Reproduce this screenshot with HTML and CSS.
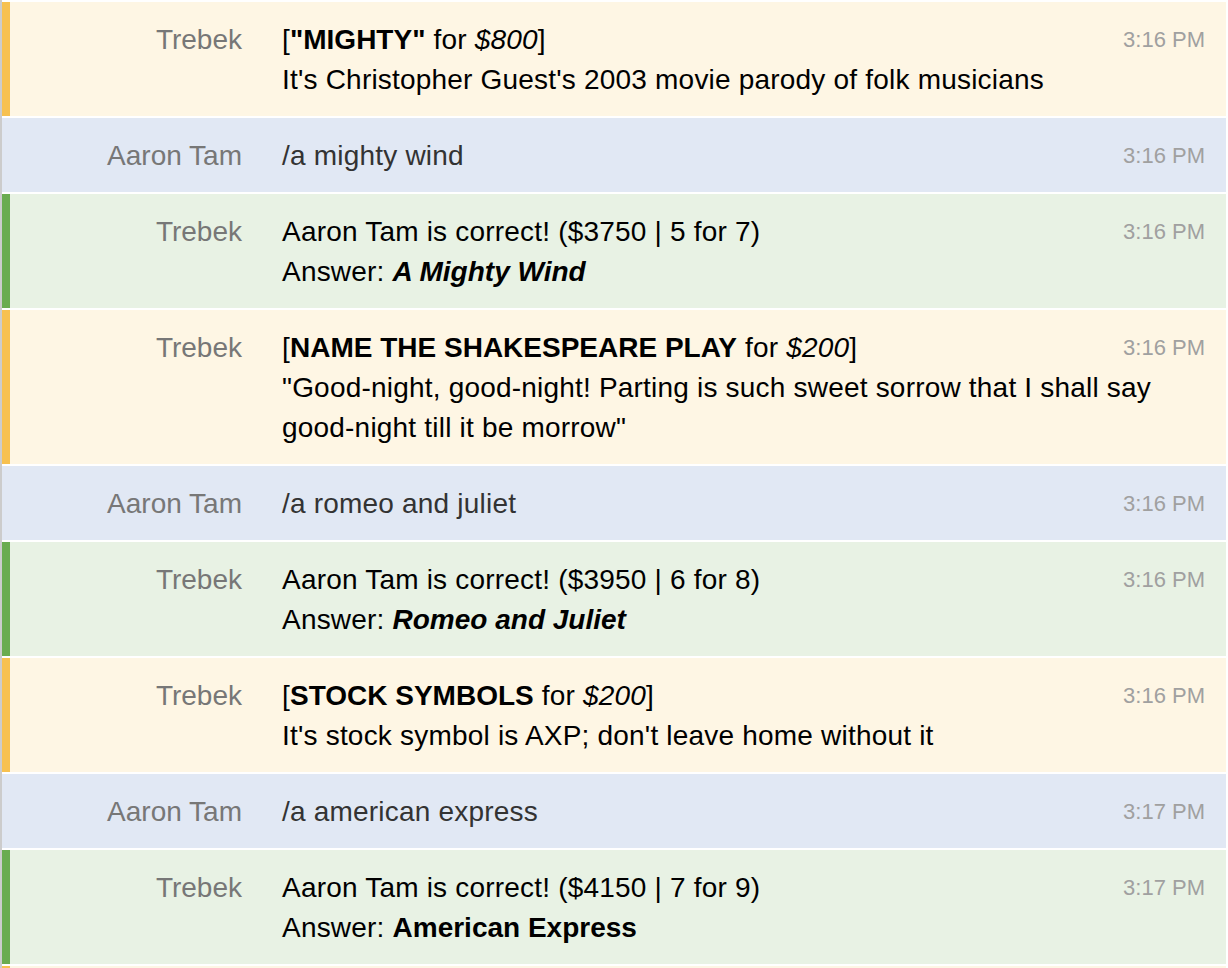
FILE: index.html
```html
<!DOCTYPE html>
<html>
<head>
<meta charset="utf-8">
<link rel="stylesheet" href="styles.css">
</head>
<body>
<div class="log">
  <div class="row clue">
    <div class="name">Trebek</div>
    <div class="body">
      <span class="time">3:16 PM</span>
      <div class="msg"><div>[<b>"MIGHTY"</b> for <i>$800</i>]</div><div>It's Christopher Guest's 2003 movie parody of folk musicians</div></div>
    </div>
  </div>
  <div class="row user">
    <div class="name">Aaron Tam</div>
    <div class="body">
      <span class="time">3:16 PM</span>
      <div class="msg">/a mighty wind</div>
    </div>
  </div>
  <div class="row correct">
    <div class="name">Trebek</div>
    <div class="body">
      <span class="time">3:16 PM</span>
      <div class="msg"><div>Aaron Tam is correct! ($3750 | 5 for 7)</div><div>Answer: <b><i>A Mighty Wind</i></b></div></div>
    </div>
  </div>
  <div class="row clue">
    <div class="name">Trebek</div>
    <div class="body">
      <span class="time">3:16 PM</span>
      <div class="msg"><div>[<b>NAME THE SHAKESPEARE PLAY</b> for <i>$200</i>]</div><div>"Good-night, good-night! Parting is such sweet sorrow that I shall say <span class="nowrap">good-night</span> till it be morrow"</div></div>
    </div>
  </div>
  <div class="row user">
    <div class="name">Aaron Tam</div>
    <div class="body">
      <span class="time">3:16 PM</span>
      <div class="msg">/a romeo and juliet</div>
    </div>
  </div>
  <div class="row correct">
    <div class="name">Trebek</div>
    <div class="body">
      <span class="time">3:16 PM</span>
      <div class="msg"><div>Aaron Tam is correct! ($3950 | 6 for 8)</div><div>Answer: <b><i>Romeo and Juliet</i></b></div></div>
    </div>
  </div>
  <div class="row clue">
    <div class="name">Trebek</div>
    <div class="body">
      <span class="time">3:16 PM</span>
      <div class="msg"><div>[<b>STOCK SYMBOLS</b> for <i>$200</i>]</div><div>It's stock symbol is AXP; don't leave home without it</div></div>
    </div>
  </div>
  <div class="row user">
    <div class="name">Aaron Tam</div>
    <div class="body">
      <span class="time">3:17 PM</span>
      <div class="msg">/a american express</div>
    </div>
  </div>
  <div class="row correct">
    <div class="name">Trebek</div>
    <div class="body">
      <span class="time">3:17 PM</span>
      <div class="msg"><div>Aaron Tam is correct! ($4150 | 7 for 9)</div><div>Answer: <b>American Express</b></div></div>
    </div>
  </div>
  <div class="row clue tail"></div>
</div>
</body>
</html>
```
FILE: styles.css
```css
html, body {
  margin: 0;
  padding: 0;
  background: #ffffff;
}
body {
  font-family: "Liberation Sans", Arial, Helvetica, sans-serif;
  height: 968px;
  overflow: hidden;
}
.log {
  border-left: 2px solid #cccccc;
  padding-top: 2px;
  min-height: 968px;
  box-sizing: border-box;
}
.row {
  display: grid;
  grid-template-columns: 232px 1fr;
  column-gap: 40px;
  margin: 0 2px 2px 0;
  padding: 18px 21px 16px 0;
  border-left: 8px solid transparent;
  font-size: 28px;
  line-height: 40px;
}
.tail {
  min-height: 40px;
}
.clue {
  background: #fef6e4;
  border-left-color: #f7c150;
}
.user {
  background: #e1e8f4;
  border-left-color: #e1e8f4;
}
.correct {
  background: #e8f2e4;
  border-left-color: #6aac50;
}
.name {
  text-align: right;
  color: #777777;
}
.msg {
  color: #000000;
  letter-spacing: 0.2px;
}
.msg b {
  letter-spacing: 0;
}
.user .msg {
  color: #333333;
}
.time {
  float: right;
  margin-left: 16px;
  color: #a0a0a0;
  font-size: 22px;
  line-height: 40px;
}
.nowrap {
  white-space: nowrap;
}
```
